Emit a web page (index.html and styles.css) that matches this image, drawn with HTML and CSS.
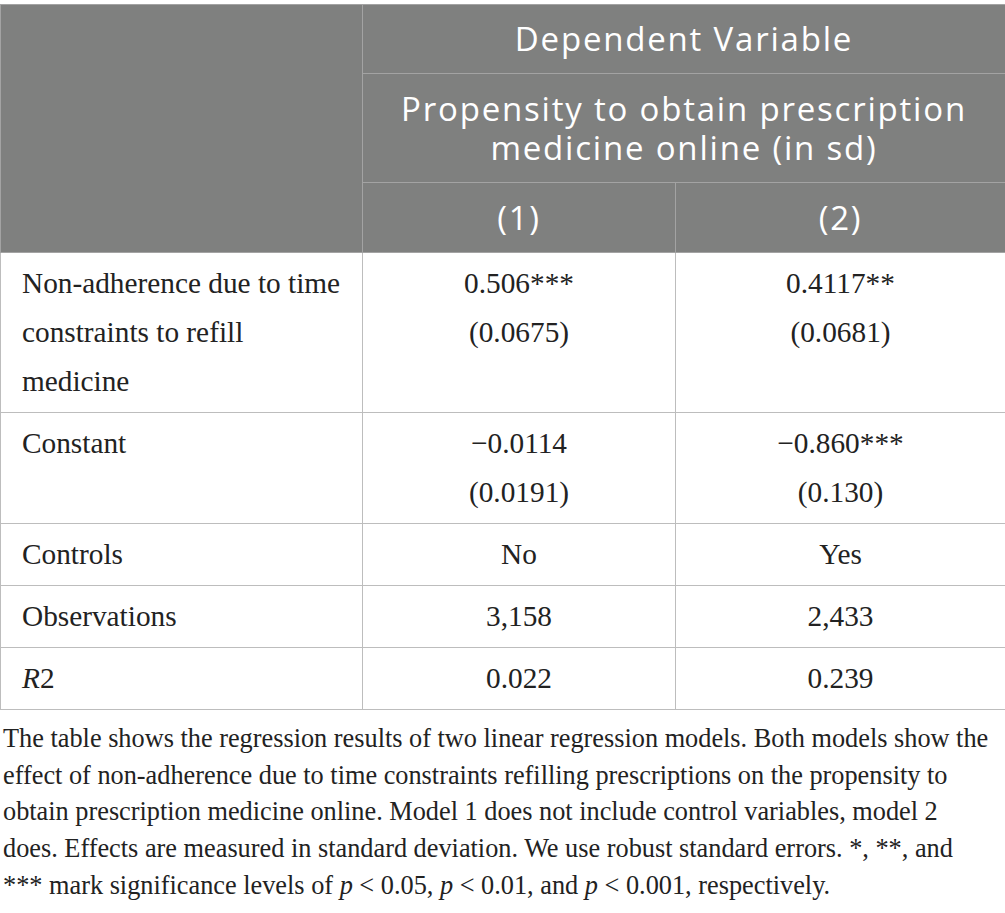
FILE: index.html
```html
<!DOCTYPE html>
<html lang="en">
<head>
<meta charset="utf-8">
<title>Regression table</title>
<link rel="stylesheet" href="styles.css">
</head>
<body>
<div class="wrap">
<table class="reg">
  <colgroup>
    <col class="c1">
    <col class="c2">
    <col class="c3">
  </colgroup>
  <thead>
    <tr class="hr1">
      <th rowspan="3" class="blank"></th>
      <th colspan="2">Dependent Variable</th>
    </tr>
    <tr class="hr2">
      <th colspan="2">Propensity to obtain prescription<br>medicine online (in sd)</th>
    </tr>
    <tr class="hr3">
      <th>(1)</th>
      <th>(2)</th>
    </tr>
  </thead>
  <tbody>
    <tr>
      <td class="lab">Non-adherence due to time<br>constraints to refill<br>medicine</td>
      <td class="num">0.506***<br>(0.0675)</td>
      <td class="num">0.4117**<br>(0.0681)</td>
    </tr>
    <tr>
      <td class="lab">Constant</td>
      <td class="num">−0.0114<br>(0.0191)</td>
      <td class="num">−0.860***<br>(0.130)</td>
    </tr>
    <tr>
      <td class="lab">Controls</td>
      <td class="num">No</td>
      <td class="num">Yes</td>
    </tr>
    <tr>
      <td class="lab">Observations</td>
      <td class="num">3,158</td>
      <td class="num">2,433</td>
    </tr>
    <tr>
      <td class="lab"><i>R</i>2</td>
      <td class="num">0.022</td>
      <td class="num">0.239</td>
    </tr>
  </tbody>
</table>
<p class="note">The table shows the regression results of two linear regression models. Both models show the effect of non-adherence due to time constraints refilling prescriptions on the propensity to obtain prescription medicine online. Model 1 does not include control variables, model 2 does. Effects are measured in standard deviation. We use robust standard errors. *, **, and *** mark significance levels of <i>p</i>&nbsp;&lt;&nbsp;0.05, <i>p</i>&nbsp;&lt;&nbsp;0.01, and <i>p</i>&nbsp;&lt;&nbsp;0.001, respectively.</p>
</div>
</body>
</html>
```

FILE: styles.css
```css
html, body {
  margin: 0;
  padding: 0;
  background: #ffffff;
}

.wrap {
  padding-top: 4px;
  width: 1005px;
}

.reg {
  border-collapse: collapse;
  width: 1005px;
  table-layout: fixed;
  font-family: "Liberation Serif", "Times New Roman", serif;
  color: #222222;
}

.c1 { width: 362px; }
.c2 { width: 313px; }
.c3 { width: 330px; }

.reg th {
  background: #7f807f;
  color: #ffffff;
  font-family: "Open Sans", "Noto Sans", sans-serif;
  font-weight: 400;
  font-size: 33px;
  letter-spacing: 1.8px;
  line-height: 39px;
  text-align: center;
  border: 1px solid #a3a3a3;
  padding: 14px 4px 15px;
}

.reg .hr2 th {
  padding: 15px 4px 15px;
}

.reg .hr3 th {
  padding: 15px 4px 15px;
}

.reg td {
  border: 1px solid #bdbdbd;
  font-size: 29.3px;
  line-height: 49px;
  padding: 6px 21px 6px;
  vertical-align: top;
}

.reg td.num {
  text-align: center;
}

.note {
  margin: 11px 0 0;
  font-family: "Liberation Serif", "Times New Roman", serif;
  font-size: 26.3px;
  line-height: 36.7px;
  color: #222222;
  padding: 0 12px 0 3px;
}
```
